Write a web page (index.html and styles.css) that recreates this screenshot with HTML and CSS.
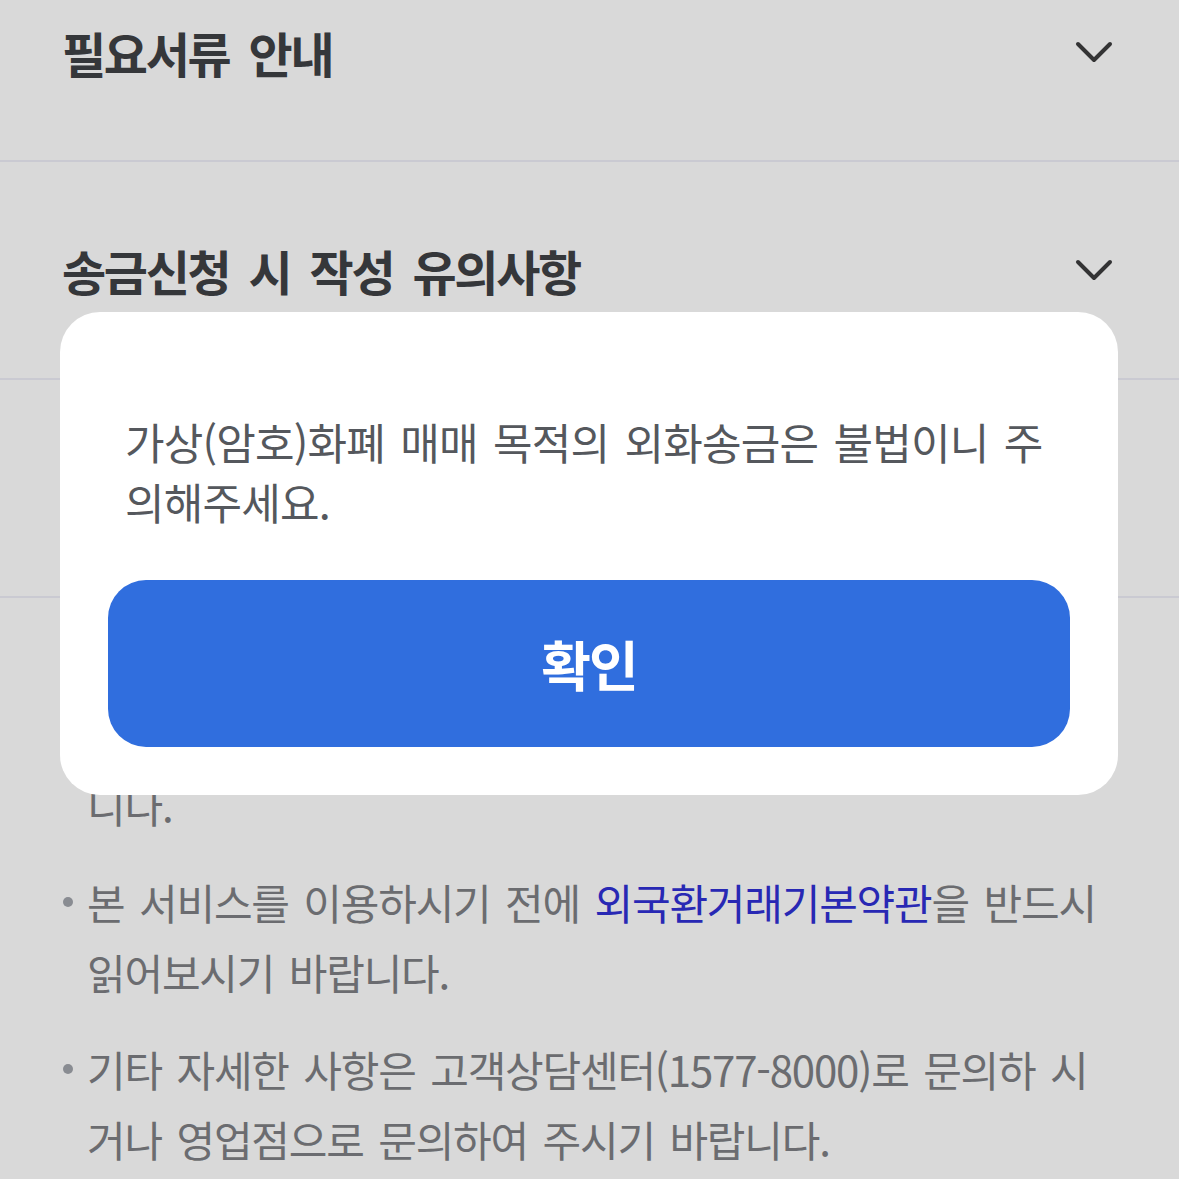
FILE: index.html
```html
<!DOCTYPE html>
<html lang="ko">
<head>
<meta charset="utf-8">
<title>해외송금 안내</title>
<link rel="stylesheet" href="styles.css">
</head>
<body>
<div class="page">
  <section class="acc">
    <div class="acc-head">
      <h2 class="acc-title">필요서류 안내</h2>
      <svg class="chev" viewBox="0 0 38 23" width="38" height="23"><path d="M3 3 L19 19 L35 3"/></svg>
    </div>
  </section>
  <section class="acc">
    <div class="acc-head">
      <h2 class="acc-title">송금신청 시 작성 유의사항</h2>
      <svg class="chev" viewBox="0 0 38 23" width="38" height="23"><path d="M3 3 L19 19 L35 3"/></svg>
    </div>
  </section>
  <section class="acc">
    <div class="acc-head">
      <h2 class="acc-title">해외송금 제한 안내</h2>
      <svg class="chev" viewBox="0 0 38 23" width="38" height="23"><path d="M3 3 L19 19 L35 3"/></svg>
    </div>
  </section>
  <ul class="notes">
    <li>해외송금은 송금 목적과 금액에 따라 필요한 서류가 달라질 수 있으며, 서류 미비 시 송금이 제한되거나 지연될 수 있습니다.</li>
    <li>본 서비스를 이용하시기 전에 <a class="link" href="#">외국환거래기본약관</a>을 반드시 읽어보시기 바랍니다.</li>
    <li>기타 자세한 사항은 고객상담센터(1577-8000)로 문의하 시거나 영업점으로 문의하여 주시기 바랍니다.</li>
  </ul>
</div>
<div class="dim"></div>
<div class="modal" role="dialog">
  <p class="modal-text">가상(암호)화폐 매매 목적의 외화송금은 불법이니 주의해주세요.</p>
  <button class="btn" type="button">확인</button>
</div>
</body>
</html>
```
FILE: styles.css
```css
html, body {
  margin: 0;
  padding: 0;
  background: #ffffff;
  height: 1179px;
  overflow: hidden;
}
body {
  font-family: "Noto Sans CJK KR", "Noto Sans", sans-serif;
  position: relative;
}
.page {
  margin-top: -56px;
}
.acc {
  border-bottom: 2px solid #eeeef7;
}
.acc-head {
  height: 216px;
  display: flex;
  align-items: center;
  justify-content: space-between;
  padding: 0 66px 0 62px;
}
.acc-title {
  margin: 0;
  font-size: 48px;
  font-weight: 700;
  letter-spacing: -2.3px;
  word-spacing: 8px;
  color: #3f4145;
  line-height: 1;
}
.chev {
  display: block;
  fill: none;
  stroke: #3c3c3e;
  stroke-width: 4;
  stroke-linecap: round;
  stroke-linejoin: round;
}
.notes {
  list-style: none;
  margin: 0;
  padding: 32px 62px 0 62px;
  display: flex;
  flex-direction: column;
  gap: 27px;
}
.notes li {
  position: relative;
  padding-left: 25px;
  font-size: 42px;
  line-height: 70px;
  letter-spacing: -1.2px;
  word-spacing: 4px;
  color: #7e7f84;
}
.notes li::before {
  content: "";
  position: absolute;
  left: 1px;
  top: 30px;
  width: 10px;
  height: 10px;
  border-radius: 50%;
  background: #a2a5ac;
}
.link {
  color: #2f2fd4;
  text-decoration: none;
}
.dim {
  position: absolute;
  inset: 0;
  background: rgba(0, 0, 0, 0.15);
}
.modal {
  position: absolute;
  top: 312px;
  left: 60px;
  width: 1058px;
  box-sizing: border-box;
  background: #ffffff;
  border-radius: 40px;
  padding: 99px 48px 48px 48px;
  display: flex;
  flex-direction: column;
  gap: 49px;
}
.modal-text {
  margin: 0;
  padding: 0 17px;
  font-size: 43px;
  line-height: 60px;
  letter-spacing: -0.8px;
  word-spacing: 4px;
  color: #55585d;
}
.btn {
  height: 167px;
  border: none;
  border-radius: 38px;
  background: #306ede;
  color: #ffffff;
  font-family: "Noto Sans CJK KR", "Noto Sans", sans-serif;
  font-size: 54px;
  font-weight: 700;
  letter-spacing: -2px;
  padding: 0;
}
```
